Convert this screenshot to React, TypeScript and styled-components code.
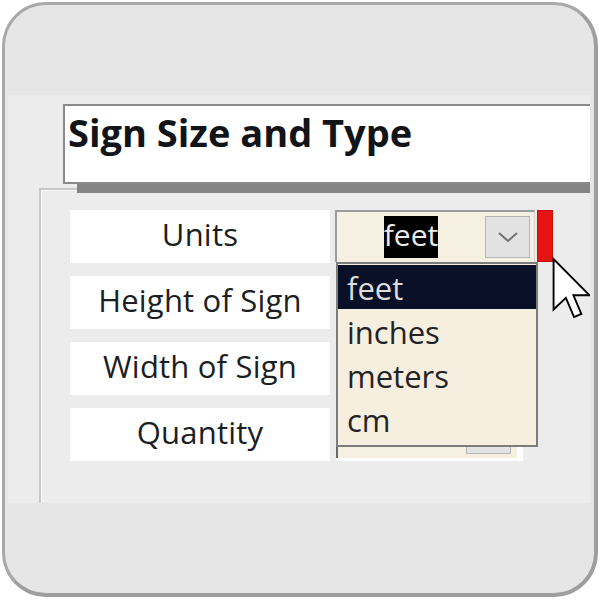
import React from "react";
import styled, { createGlobalStyle } from "styled-components";

const GlobalStyle = createGlobalStyle`
  html, body {
    margin: 0;
    padding: 0;
    background: #ffffff;
  }
  body {
    font-family: "Open Sans", Lato, "Liberation Sans", sans-serif;
  }
`;

const Page = styled.div`
  width: 601px;
  height: 601px;
  padding: 2px 0 0 2px;
  box-sizing: border-box;
`;

const Frame = styled.div`
  width: 596px;
  height: 595px;
  box-sizing: border-box;
  border: 3px solid #a9a9a9;
  border-right-width: 4px;
  border-bottom-width: 4px;
  border-right-color: #9e9e9e;
  border-bottom-color: #9e9e9e;
  border-radius: 44px;
  background: #e6e6e6;
  overflow: hidden;
  display: flex;
  flex-direction: column;
`;

const TopBand = styled.div`
  height: 90px;
  flex: none;
`;

const Panel = styled.div`
  height: 408px;
  flex: none;
  margin: 0 4px 0 3px;
  background: #ececec;
  overflow: hidden;
  display: flex;
  flex-direction: column;
  padding-top: 9px;
  box-sizing: border-box;
`;

const Header = styled.div`
  position: relative;
  z-index: 1;
  height: 80px;
  margin: 0 -20px 0 55px;
  flex: none;
  box-sizing: border-box;
  border: 2px solid #8a8a8a;
  background: #ffffff;
  box-shadow: 14px 9px 0 #858585;
  padding: 4px 0 0 3px;
  font-size: 38px;
  line-height: 1.2;
  font-weight: 700;
  color: #111418;
`;

const GroupBox = styled.div`
  flex: 1;
  margin: 4px 0 0 31px;
  border-top: 2px solid #c8c8c8;
  border-left: 2px solid #c8c8c8;
  box-shadow: inset 1px 1px 0 #f8f8f8;
  padding: 20px 0 0 29px;
`;

const FormGrid = styled.div`
  display: grid;
  grid-template-columns: 260px 187px;
  grid-auto-rows: 53px;
  column-gap: 6px;
  row-gap: 13px;
`;

const Label = styled.div`
  background: #ffffff;
  display: flex;
  align-items: center;
  justify-content: center;
  padding-bottom: 6px;
  box-sizing: border-box;
  font-size: 31px;
  letter-spacing: 0.2px;
  color: #1b1e23;
`;

const InputCell = styled.div<{ $plain?: boolean }>`
  position: relative;
  background: ${(p) => (p.$plain ? "transparent" : "#ffffff")};
  display: flex;
  align-items: flex-start;
  gap: 2px;
`;

const Combo = styled.div`
  position: relative;
  flex: none;
  width: 200px;
  height: 52px;
  margin-left: -1px;
  box-sizing: border-box;
  border-top: 2px solid #9c9c9c;
  border-left: 2px solid #9c9c9c;
  border-right: 1px solid #d4d4d4;
  background: #f6f0e2;
  display: flex;
  align-items: center;
  padding: 0 4px 0 0;
`;

const ValueArea = styled.div`
  flex: 1;
  display: flex;
  justify-content: center;
`;

const SelectedValue = styled.span`
  background: #000000;
  color: #ececec;
  font-size: 30px;
  height: 42px;
  line-height: 38px;
  padding: 0;
`;

const DropButton = styled.div`
  width: 45px;
  height: 42px;
  flex: none;
  box-sizing: border-box;
  background: #e2e2e2;
  border: 1px solid #b6b6b6;
  display: flex;
  align-items: center;
  justify-content: center;
`;

const RedMarker = styled.div`
  width: 16px;
  height: 52px;
  flex: none;
  box-sizing: border-box;
  background: #e81414;
  border: 1px solid #c21010;
`;

const DropList = styled.ul`
  position: absolute;
  z-index: 2;
  top: 100%;
  left: -1px;
  width: 202px;
  margin: 0;
  padding: 1px 0 4px;
  list-style: none;
  box-sizing: border-box;
  border: 2px solid #7c7c7c;
  background: #f6efe0;
`;

const DropItem = styled.li<{ $active?: boolean }>`
  height: 44px;
  display: flex;
  align-items: center;
  padding: 1px 0 0 9px;
  box-sizing: border-box;
  font-size: 31px;
  color: ${(p) => (p.$active ? "#dcdcdc" : "#222326")};
  background: ${(p) => (p.$active ? "#0b1029" : "transparent")};
`;

const TextBox = styled.div`
  width: 181px;
  height: 50px;
  box-sizing: border-box;
  border-left: 2px solid #6a6a6a;
  background: #f6f0e2;
  display: flex;
  align-items: center;
  justify-content: flex-end;
  padding-right: 6px;
`;

const Cursor = styled.svg`
  position: absolute;
  z-index: 3;
  left: 216px;
  top: 47px;
`;

const Chevron = () => (
  <svg width="24" height="12" viewBox="0 0 24 12">
    <polyline
      points="3,2 12,10 21,2"
      fill="none"
      stroke="#707070"
      strokeWidth="2"
    />
  </svg>
);

const units = ["feet", "inches", "meters", "cm"];

export default function App() {
  return (
    <Page>
      <GlobalStyle />
      <Frame>
        <TopBand />
        <Panel>
          <Header>Sign Size and Type</Header>
          <GroupBox>
            <FormGrid>
              <Label>Units</Label>
              <InputCell $plain>
                <Combo>
                  <ValueArea>
                    <SelectedValue>feet</SelectedValue>
                  </ValueArea>
                  <DropButton>
                    <Chevron />
                  </DropButton>
                  <DropList>
                    {units.map((u, i) => (
                      <DropItem key={u} $active={i === 0}>
                        {u}
                      </DropItem>
                    ))}
                  </DropList>
                </Combo>
                <RedMarker />
                <Cursor width="41" height="64" viewBox="-0.5 -0.5 13 20">
                  <path
                    d="M0 0 L0 16 L3.9 12.3 L6.5 18.4 L8.8 17.4 L6.3 11.5 L11.4 11.5 Z"
                    fill="#ffffff"
                    stroke="#000000"
                    strokeWidth="0.6"
                    strokeLinejoin="miter"
                  />
                </Cursor>
              </InputCell>

              <Label>Height of Sign</Label>
              <InputCell>
                <TextBox>
                  <DropButton />
                </TextBox>
              </InputCell>

              <Label>Width of Sign</Label>
              <InputCell>
                <TextBox>
                  <DropButton />
                </TextBox>
              </InputCell>

              <Label>Quantity</Label>
              <InputCell>
                <TextBox>
                  <DropButton />
                </TextBox>
              </InputCell>
            </FormGrid>
          </GroupBox>
        </Panel>
      </Frame>
    </Page>
  );
}
